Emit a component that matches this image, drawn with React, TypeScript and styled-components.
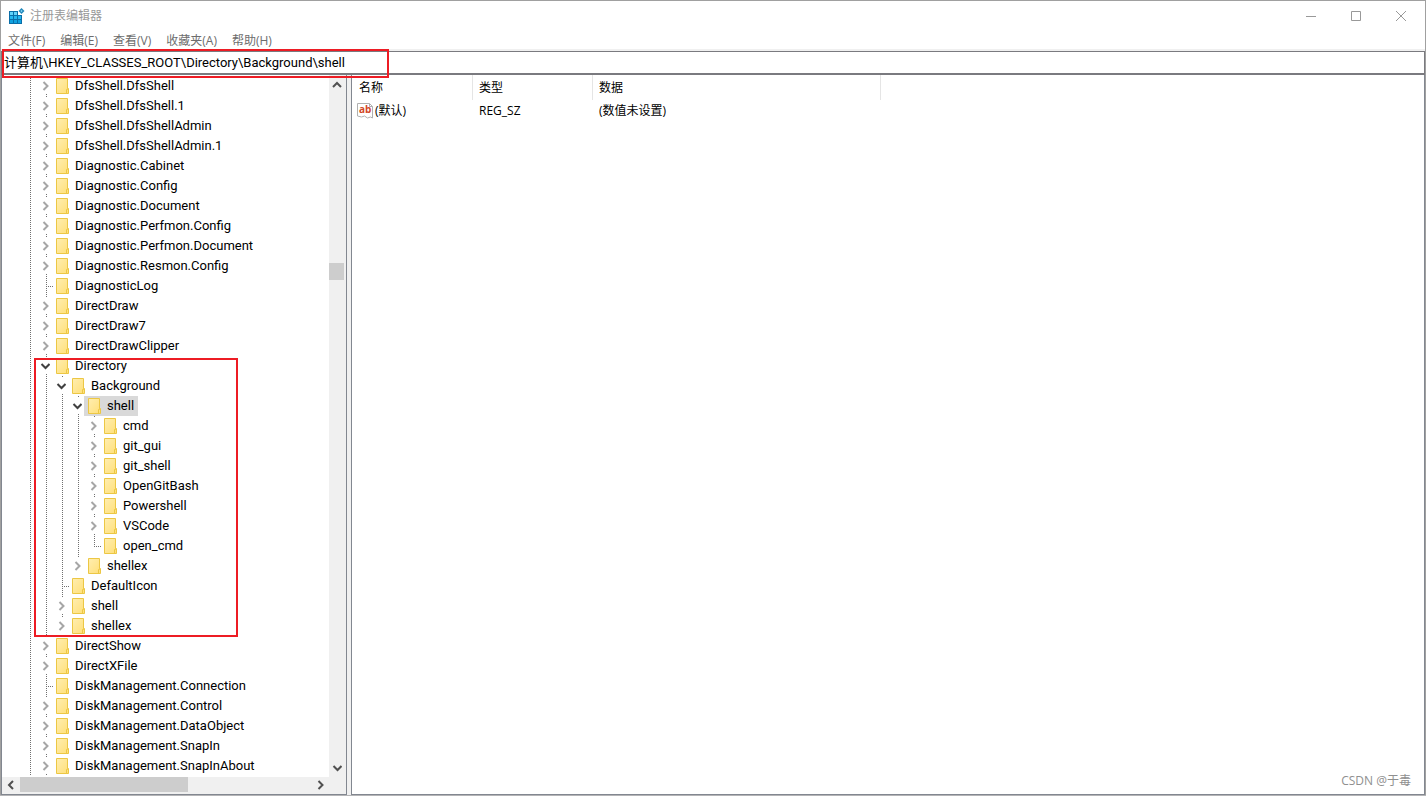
import React from "react";
import styled, { createGlobalStyle } from "styled-components";

const Global = createGlobalStyle`
  *, *::before, *::after { box-sizing: border-box; }
  body { margin: 0; overflow: hidden; }
  body, button, input {
    font-family: "Open Sans", "Noto Sans CJK SC", sans-serif;
    font-size: 12px;
    line-height: 20px;
    color: #000;
  }
  button { border: 0; padding: 0; background: none; }
`;

const Desktop = styled.div`
  height: 100vh;
  display: flex;
  flex-direction: column;
  padding-bottom: 1px;
  background: #b4b4b6;
`;

const Window = styled.div`
  position: relative;
  flex: 1;
  min-height: 0;
  display: flex;
  flex-direction: column;
  border: 1px solid #a0a0a0;
  border-bottom: 0;
  background: #fff;
`;

const TitleBar = styled.header`
  display: flex;
  align-items: center;
  height: 30px;
  padding: 0 4px 0 7px;
  gap: 5px;
  color: #999;
`;

const Title = styled.h1`
  flex: 1;
  margin: 0;
  font-size: 12px;
  font-weight: 400;
`;

const CaptionButton = styled.button`
  width: 40px;
  height: 28px;
  display: flex;
  align-items: center;
  justify-content: center;
`;

const MenuBar = styled.nav`
  display: flex;
  gap: 15px;
  height: 20px;
  padding: 0 7px;
  border-bottom: 2px solid #f0f0f0;
`;

const MenuItem = styled.button`
  font-size: 12px;
  line-height: 20px;
  height: 20px;
  color: #6d6d6d;
`;

const Address = styled.input`
  flex: none;
  width: 100%;
  height: 24px;
  padding: 0 3px 2px 2px;
  border: 1px solid #7a7a7f;
  border-bottom-width: 2px;
  outline: 0;
  border-radius: 0;
  font-family: Roboto, "Noto Sans CJK SC", sans-serif;
  font-size: 13px;
`;

const Panes = styled.main`
  flex: 1;
  min-height: 0;
  display: flex;
  gap: 4px;
  background: #f0f0f0;
`;

const TreePane = styled.section`
  flex: none;
  width: 346px;
  display: grid;
  grid-template: minmax(0, 1fr) 17px / minmax(0, 1fr) 17px;
  border: 1px solid #828790;
  border-top: 0;
  background: #f0f0f0;
`;

const ListPane = styled.section`
  flex: 1;
  min-width: 0;
  border: 1px solid #828790;
  border-top: 0;
  background: #fff;
`;

const Tree = styled.ul`
  margin: 0;
  padding: 1px 0 0 20px;
  list-style: none;
  overflow: hidden;
  background: #fff;
`;

const Row = styled.li`
  display: flex;
  height: 20px;
`;

const dots = "repeating-linear-gradient(#707070 0 1px, transparent 1px 2px)";

const Guide = styled.span<{ $line: "full" | "top" | "none" }>`
  flex: none;
  width: 16px;
  height: 20px;
  display: flex;
  align-items: center;
  justify-content: flex-end;
  background: ${(p) =>
    p.$line === "none" ? "none" : `${dots} 8px 0 / 1px ${p.$line === "top" ? "11px" : "20px"} no-repeat`};
`;

const Branch = styled.span`
  width: 6px;
  height: 1px;
  background: repeating-linear-gradient(90deg, #707070 0 1px, transparent 1px 2px);
`;

const Toggle = styled.button`
  width: 16px;
  height: 16px;
  display: flex;
  align-items: center;
  justify-content: flex-start;
  padding-left: 2px;
  background: #fff;
`;

const Label = styled.span<{ $selected?: boolean }>`
  display: flex;
  align-items: center;
  gap: 6px;
  margin-left: -2px;
  padding: 0 4px;
  white-space: nowrap;
  background: ${(p) => (p.$selected ? "#d9d9d9" : "transparent")};
`;

const KeyName = styled.span`
  font-family: Roboto, "Noto Sans CJK SC", sans-serif;
  font-size: 13px;
  line-height: 20px;
`;

const ScrollBar = styled.div<{ $axis: "x" | "y" }>`
  display: flex;
  flex-direction: ${(p) => (p.$axis === "x" ? "row" : "column")};
  padding: ${(p) => (p.$axis === "x" ? "0 0 2px 1px" : "1px 2px 1px 0")};
  background: #f0f0f0;
  min-width: 0;
  min-height: 0;
`;

const ScrollButton = styled.button<{ $axis: "x" | "y" }>`
  flex: none;
  width: ${(p) => (p.$axis === "x" ? "17px" : "15px")};
  height: ${(p) => (p.$axis === "x" ? "15px" : "17px")};
  display: flex;
  align-items: center;
  justify-content: center;
  padding-right: ${(p) => (p.$axis === "x" ? "2px" : "0")};
`;

const Track = styled.div<{ $axis: "x" | "y" }>`
  flex: 1;
  min-width: 0;
  min-height: 0;
  display: flex;
  flex-direction: ${(p) => (p.$axis === "x" ? "row" : "column")};
`;

const Gap = styled.div<{ $grow: number }>`
  flex: ${(p) => p.$grow} 1 0;
`;

const Thumb = styled.div<{ $grow: number }>`
  flex: ${(p) => p.$grow} 1 0;
  background: #cdcdcd;
`;

const Values = styled.table`
  width: 100%;
  table-layout: fixed;
  border-collapse: separate;
  border-spacing: 0;

  th, td {
    height: 22px;
    padding: 0 6px;
    text-align: left;
    font-size: 12px;
    font-weight: 400;
    line-height: 20px;
    white-space: nowrap;
  }
  th {
    height: 25px;
    border-right: 1px solid #e5e5e5;
  }
  th:last-child { border-right: 0; }
  th:first-child { padding-left: 7px; }
  td:first-child { padding-left: 5px; }
`;

const NameColumn = styled.col`
  width: 121px;
`;

const TypeColumn = styled.col`
  width: 120px;
`;

const DataColumn = styled.col`
  width: 288px;
`;

const ValueName = styled.span`
  display: flex;
  align-items: center;
  gap: 2px;
`;

const Highlight = styled.div<{ $x: number; $y: number; $w: number; $h: number }>`
  position: absolute;
  left: ${(p) => p.$x}px;
  top: ${(p) => p.$y}px;
  width: ${(p) => p.$w}px;
  height: ${(p) => p.$h}px;
  border: 2px solid #ed1c24;
  pointer-events: none;
`;

const Signature = styled.span`
  position: absolute;
  right: 14px;
  bottom: 4px;
  font-size: 12px;
  color: #8f8f8f;
`;

type Dir = "right" | "down" | "left" | "up";
const chevrons: Record<Dir, string> = {
  right: "M3.5 1l4 4-4 4",
  down: "M1.5 3l4 4 4-4",
  left: "M7 1L3 5l4 4",
  up: "M1 7l4-4 4 4",
};

const Chevron = ({ dir, color }: { dir: Dir; color: string }) => (
  <svg width="10" height="10" viewBox="0 0 10 10" fill="none" stroke={color} strokeWidth="2">
    <path d={chevrons[dir]} />
  </svg>
);

const Folder = () => (
  <svg width="13" height="16" viewBox="0 0 13 16">
    <defs>
      <linearGradient id="folder" x1="0" y1="0" x2="1" y2="1">
        <stop offset="0" stopColor="#ffeeb0" />
        <stop offset="1" stopColor="#ffdf78" />
      </linearGradient>
    </defs>
    <path d="M.5.5h11v10h1v5H.5z" fill="url(#folder)" stroke="#ecc744" />
    <path d="M10.5 15.5v-4h1v-1" fill="none" stroke="#ecc744" />
  </svg>
);

const AppIcon = () => (
  <svg width="17" height="17" viewBox="0 0 17 17">
    <path d="M1 3h9v4h4v9H1z" fill="#0a6ea8" />
    <path d="M2 4h3v3H2zM6 4h3v3H6z" fill="#62d3fa" />
    <path d="M2 8h3v3H2zM6 8h3v3H6zM10 8h3v3h-3z" fill="#25b6ee" />
    <path d="M2 12h3v3H2zM6 12h3v3H6zM10 12h3v3h-3z" fill="#10a2e0" />
    <path d="M13.5 0l3 3-3 3-3-3z" fill="#2489bb" />
    <path d="M13.5 2l1 1-1 1-1-1z" fill="#8fe0ff" />
  </svg>
);

const StringIcon = () => (
  <svg width="16" height="16" viewBox="0 0 16 16">
    <path d="M.5.5h12l3 3v11.5l-2-1-3 1-3-2-3 1-4-1z" fill="#fff" stroke="#b0b0b0" />
    <path d="M12.5.5v3h3" fill="none" stroke="#b0b0b0" />
    <text x="2" y="10" fontSize="10" fontWeight="700" fontFamily="Open Sans, sans-serif" fill="#d24726">ab</text>
  </svg>
);

type Node = { name: string; leaf?: boolean; selected?: boolean; children?: Node[] };

const closed = (...names: string[]): Node[] => names.map((name) => ({ name }));

const keys: Node[] = [
  ...closed(
    "DfsShell.DfsShell", "DfsShell.DfsShell.1", "DfsShell.DfsShellAdmin", "DfsShell.DfsShellAdmin.1",
    "Diagnostic.Cabinet", "Diagnostic.Config", "Diagnostic.Document", "Diagnostic.Perfmon.Config",
    "Diagnostic.Perfmon.Document", "Diagnostic.Resmon.Config",
  ),
  { name: "DiagnosticLog", leaf: true },
  ...closed("DirectDraw", "DirectDraw7", "DirectDrawClipper"),
  {
    name: "Directory",
    children: [
      {
        name: "Background",
        children: [
          {
            name: "shell",
            selected: true,
            children: [
              ...closed("cmd", "git_gui", "git_shell", "OpenGitBash", "Powershell", "VSCode"),
              { name: "open_cmd", leaf: true },
            ],
          },
          { name: "shellex" },
        ],
      },
      { name: "DefaultIcon", leaf: true },
      { name: "shell" },
      { name: "shellex" },
    ],
  },
  ...closed("DirectShow", "DirectXFile"),
  { name: "DiskManagement.Connection", leaf: true },
  ...closed(
    "DiskManagement.Control", "DiskManagement.DataObject", "DiskManagement.SnapIn",
    "DiskManagement.SnapInAbout",
  ),
];

const renderNodes = (nodes: Node[], trail: boolean[], continues = false): React.ReactNode =>
  nodes.map((node, i) => {
    const last = i === nodes.length - 1 && !continues;
    return (
      <React.Fragment key={node.name}>
        <Row role="treeitem" aria-level={trail.length} aria-selected={!!node.selected}>
          {trail.map((on, k) => (
            <Guide key={k} $line={on ? "full" : "none"} />
          ))}
          <Guide $line={last ? "top" : "full"}>
            {node.leaf ? (
              <Branch />
            ) : (
              <Toggle aria-label={`Toggle ${node.name}`}>
                <Chevron dir={node.children ? "down" : "right"} color={node.children ? "#404040" : "#a6a6a6"} />
              </Toggle>
            )}
          </Guide>
          <Label $selected={node.selected}>
            <Folder />
            <KeyName>{node.name}</KeyName>
          </Label>
        </Row>
        {node.children && renderNodes(node.children, [...trail, !last])}
      </React.Fragment>
    );
  });

export default function App() {
  return (
    <Desktop>
      <Global />
      <Window>
        <TitleBar>
          <AppIcon />
          <Title>注册表编辑器</Title>
          <CaptionButton aria-label="最小化">
            <svg width="10" height="10" stroke="#999"><path d="M0 5.5h10" /></svg>
          </CaptionButton>
          <CaptionButton aria-label="最大化">
            <svg width="10" height="10" stroke="#999" fill="none"><path d="M.5.5h9v9h-9z" /></svg>
          </CaptionButton>
          <CaptionButton aria-label="关闭">
            <svg width="10" height="10" stroke="#999"><path d="M0 0l10 10M10 0L0 10" /></svg>
          </CaptionButton>
        </TitleBar>
        <MenuBar>
          {["文件(F)", "编辑(E)", "查看(V)", "收藏夹(A)", "帮助(H)"].map((m) => (
            <MenuItem key={m}>{m}</MenuItem>
          ))}
        </MenuBar>
        <Address aria-label="地址" defaultValue={"计算机\\HKEY_CLASSES_ROOT\\Directory\\Background\\shell"} />
        <Panes>
          <TreePane>
            <Tree role="tree">{renderNodes(keys, [true], true)}</Tree>
            <ScrollBar $axis="y">
              <ScrollButton $axis="y" aria-label="向上滚动"><Chevron dir="up" color="#505050" /></ScrollButton>
              <Track $axis="y">
                <Gap $grow={170} />
                <Thumb $grow={17} />
                <Gap $grow={480} />
              </Track>
              <ScrollButton $axis="y" aria-label="向下滚动"><Chevron dir="down" color="#505050" /></ScrollButton>
            </ScrollBar>
            <ScrollBar $axis="x">
              <ScrollButton $axis="x" aria-label="向左滚动"><Chevron dir="left" color="#505050" /></ScrollButton>
              <Track $axis="x">
                <Thumb $grow={168} />
                <Gap $grow={124} />
              </Track>
              <ScrollButton $axis="x" aria-label="向右滚动"><Chevron dir="right" color="#505050" /></ScrollButton>
            </ScrollBar>
          </TreePane>
          <ListPane>
            <Values>
              <colgroup>
                <NameColumn />
                <TypeColumn />
                <DataColumn />
                <col />
              </colgroup>
              <thead>
                <tr><th>名称</th><th>类型</th><th>数据</th><th aria-hidden="true" /></tr>
              </thead>
              <tbody>
                <tr>
                  <td><ValueName><StringIcon />(默认)</ValueName></td>
                  <td>REG_SZ</td>
                  <td>(数值未设置)</td>
                  <td />
                </tr>
              </tbody>
            </Values>
          </ListPane>
        </Panes>
        <Highlight $x={1} $y={48} $w={387} $h={29} />
        <Highlight $x={33} $y={357} $w={204} $h={279} />
        <Signature>CSDN @于毒</Signature>
      </Window>
    </Desktop>
  );
}
